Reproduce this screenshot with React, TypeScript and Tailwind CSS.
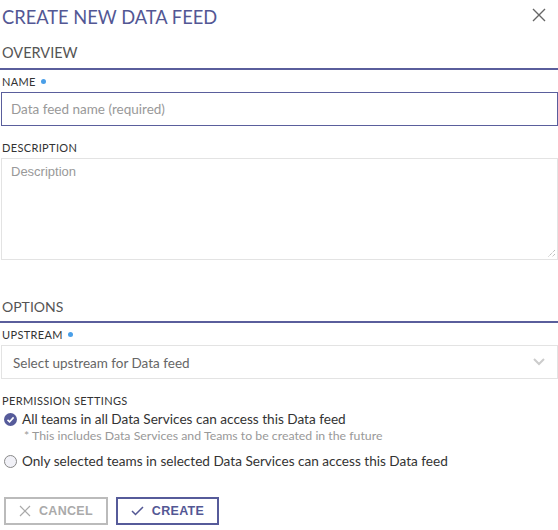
import React from "react";

const font = { fontFamily: "Lato, 'Noto Sans', sans-serif" };

function Dot() {
  return <span className="ml-[5px] inline-block h-[5px] w-[5px] rounded-full bg-[#4a9fe8] align-middle relative -top-[2px]" />;
}

export default function App() {
  return (
    <div className="w-[558px] h-[530px] bg-white text-[#333] overflow-hidden" style={font}>
      <div className="flex items-start justify-between h-[29px] pt-[6px]">
        <h1 className="pl-[2px] text-[18.3px] leading-[22px] text-[#535794]">CREATE NEW DATA FEED</h1>
        <button className="mr-[12px] mt-[2px] text-[#666]">
          <svg width="14" height="14" viewBox="0 0 14 14" stroke="currentColor" strokeWidth="1.4" fill="none">
            <path d="M1 1 L13 13 M13 1 L1 13" />
          </svg>
        </button>
      </div>

      <div className="mt-[15px] h-[18px] pl-[2px] text-[14.5px] leading-[18px] text-[#555]">OVERVIEW</div>
      <div className="mt-[6px] h-[2px] bg-[#5a5e9c]" />

      <div className="mt-[5px] h-[14px] pl-[2px] text-[11px] leading-[14px] text-[#333] tracking-[0.35px]">
        NAME<Dot />
      </div>
      <div className="mt-[3px] ml-[1px] h-[34px] border border-[#5a5e9c] flex items-center pl-[9px] pt-[1px] text-[13.5px] text-[#999]">
        Data feed name (required)
      </div>

      <div className="mt-[15px] h-[14px] pl-[2px] text-[11px] leading-[14px] text-[#333] tracking-[0.35px]">DESCRIPTION</div>
      <div className="mt-[3px] ml-[1px] h-[102px] border border-[#e3e3e3] relative px-[9px] pt-[5px] text-[13px] leading-[16px] text-[#999]" style={{ fontFamily: "'Liberation Sans', Arial, sans-serif" }}>
        Description
        <svg className="absolute right-[1px] bottom-[1px]" width="9" height="9" viewBox="0 0 9 9" stroke="#888" strokeWidth="0.8" strokeDasharray="1 1">
          <path d="M8 1 L1 8 M8 5 L5 8" />
        </svg>
      </div>

      <div className="mt-[38px] h-[18px] pl-[2px] text-[14px] leading-[18px] text-[#555]">OPTIONS</div>
      <div className="mt-[5px] h-[2px] bg-[#5a5e9c]" />

      <div className="mt-[5px] h-[14px] pl-[2px] text-[11px] leading-[14px] text-[#333] tracking-[0.35px]">
        UPSTREAM<Dot />
      </div>
      <div className="mt-[3px] ml-[1px] h-[34px] border border-[#e3e3e3] flex items-center justify-between pl-[11px] pr-[12px] text-[13.5px] text-[#666]">
        <span className="pt-[3px]">Select upstream for Data feed</span>
        <svg width="12" height="8" viewBox="0 0 12 8" fill="none" stroke="#ccc" strokeWidth="2">
          <path d="M1 1 L6 6 L11 1" />
        </svg>
      </div>

      <div className="mt-[15px] h-[14px] pl-[2px] text-[11px] leading-[14px] text-[#333] tracking-[0.35px]">PERMISSION SETTINGS</div>
      <div className="mt-[2px] h-[18px] flex items-center pl-[4px] text-[13.6px] leading-[18px] text-[#333]">
        <svg width="13" height="13" viewBox="0 0 13 13">
          <circle cx="6.5" cy="6.5" r="6.5" fill="#565b9a" />
          <path d="M3.5 6.8 L5.6 8.8 L9.6 4.4" stroke="#fff" strokeWidth="1.6" fill="none" />
        </svg>
        <span className="ml-[5px]">All teams in all Data Services can access this Data feed</span>
      </div>
      <div className="mt-[1px] h-[14px] pl-[24px] text-[12.3px] leading-[14px] text-[#999]">* This includes Data Services and Teams to be created in the future</div>
      <div className="mt-[9px] h-[18px] flex items-center pl-[4px] text-[13.6px] leading-[18px] text-[#333]">
        <svg width="13" height="13" viewBox="0 0 13 13">
          <circle cx="6.5" cy="6.5" r="6" fill="#f1f1f7" stroke="#888" strokeWidth="1" />
        </svg>
        <span className="ml-[5px]">Only selected teams in selected Data Services can access this Data feed</span>
      </div>

      <div className="mt-[27px] pl-[4px] flex gap-[8px]" style={{ fontFamily: "'Liberation Sans', Arial, sans-serif" }}>
        <button className="w-[104px] h-[28px] border-2 border-[#bbb] flex items-center justify-center gap-[8px] text-[12.5px] font-bold text-[#aaa] tracking-[0.3px]">
          <svg width="12" height="12" viewBox="0 0 12 12" stroke="#aaa" strokeWidth="1.2" fill="none">
            <path d="M1 1 L11 11 M11 1 L1 11" />
          </svg>
          CANCEL
        </button>
        <button className="w-[103px] h-[28px] border-2 border-[#565b9a] flex items-center justify-center gap-[8px] text-[12.5px] font-bold text-[#535794] tracking-[0.3px]">
          <svg width="13" height="10" viewBox="0 0 13 10" stroke="#535794" strokeWidth="1.5" fill="none">
            <path d="M1 5 L4.5 8.5 L12 1" />
          </svg>
          CREATE
        </button>
      </div>
    </div>
  );
}
